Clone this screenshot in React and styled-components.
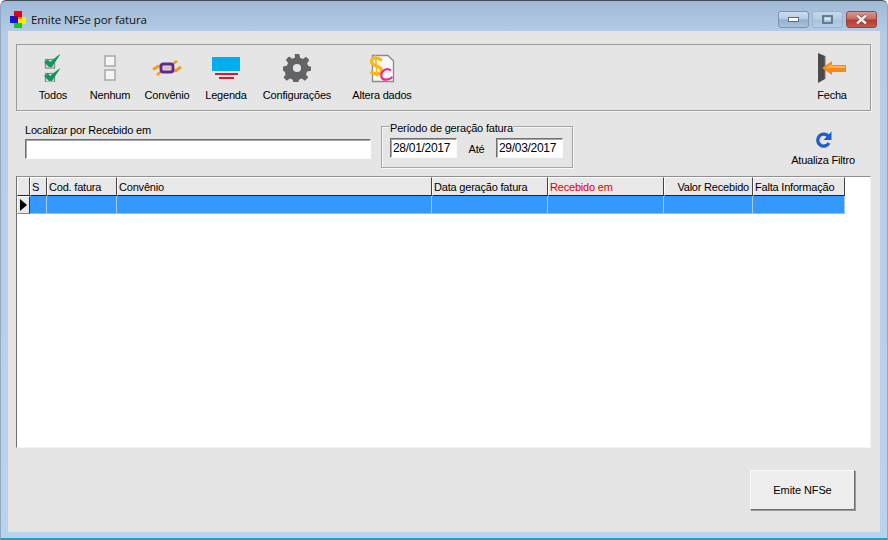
import React from 'react';
import styled, { createGlobalStyle } from 'styled-components';

const GlobalStyle = createGlobalStyle`
  html, body {
    margin: 0;
    padding: 0;
    overflow: hidden;
  }
  body {
    font-family: "Liberation Sans", Arial, sans-serif;
    font-size: 11px;
    letter-spacing: -0.2px;
    color: #000;
  }
`;

const Window = styled.div`
  width: 888px;
  height: 540px;
  box-sizing: border-box;
  display: flex;
  flex-direction: column;
  background: linear-gradient(#9fb9d6 0, #b5cce6 32px, #b9d3ee 100%);
  border: 1px solid #8fa9c2;
  border-top-color: #3f4c5a;
  border-bottom: 2px solid #1ba3c0;
  border-radius: 6px 6px 0 0;
`;

const TitleBar = styled.div`
  height: 30px;
  flex: none;
  display: flex;
  align-items: center;
  padding: 6px 10px 0 9px;
  box-sizing: border-box;
`;

const Title = styled.span`
  margin-left: 4px;
  font-family: "Open Sans", sans-serif;
  font-size: 11.5px;
  letter-spacing: -0.1px;
  color: #111;
`;

const Controls = styled.div`
  margin-left: auto;
  display: flex;
  gap: 3px;
`;

const Control = styled.div`
  width: 31px;
  height: 17px;
  box-sizing: border-box;
  display: flex;
  align-items: center;
  justify-content: center;
  border: 1px solid ${p => (p.$close ? '#8c4a46' : p.$dim ? '#9db3c9' : '#7d93ab')};
  border-radius: 3px;
  background: ${p =>
    p.$close
      ? 'linear-gradient(#d69a90 0, #cc6a5f 45%, #b53a2e 55%, #c4584c 100%)'
      : p.$dim
      ? 'linear-gradient(#c6d8ea, #b4cbe3 50%, #a9c2dd 55%, #b6cde5)'
      : 'linear-gradient(#cfdded, #b4cae1 48%, #93afcd 52%, #a9c2db)'};
`;

const Client = styled.div`
  flex: 1;
  margin: 0 7px 6px;
  background: #e5e5e5;
  display: flex;
  flex-direction: column;
  padding: 13px 9px 0 8px;
  min-height: 0;
`;

const Toolbar = styled.div`
  height: 67px;
  flex: none;
  box-sizing: border-box;
  display: flex;
  border: 1px solid #9b9b9b;
  padding: 0 8px 0 7px;
  box-shadow: 1px 1px 0 #f5f5f5;
`;

const Tool = styled.div`
  width: ${p => p.$w}px;
  flex: none;
  display: flex;
  flex-direction: column;
  align-items: center;
  margin-left: ${p => (p.$end ? 'auto' : '0')};
  white-space: nowrap;
`;

const ToolIcon = styled.div`
  height: 32px;
  margin-top: 7px;
  display: flex;
  align-items: center;
  justify-content: center;
`;

const ToolLabel = styled.span`
  margin-top: 4px;
  line-height: 14px;
`;

const FilterRow = styled.div`
  height: 65px;
  flex: none;
  display: flex;
  align-items: flex-start;
`;

const SearchBlock = styled.div`
  margin: 13px 0 0 9px;
  display: flex;
  flex-direction: column;
`;

const FieldLabel = styled.label`
  line-height: 13px;
  margin-bottom: 2px;
`;

const SearchInput = styled.div`
  width: 346px;
  height: 20px;
  box-sizing: border-box;
  background: #fff;
  border: 1px solid;
  border-color: #707070 #fafafa #fafafa #707070;
  box-shadow: inset 1px 1px 0 #a8a8a8;
`;

const PeriodGroup = styled.fieldset`
  margin: 7px 0 0 10px;
  width: 192px;
  height: 50px;
  box-sizing: border-box;
  border: 1px solid #a5a5a5;
  box-shadow: 1px 1px 0 #f7f7f7, inset 1px 1px 0 #f7f7f7;
  padding: 0 9px 0 8px;
  display: flex;
  align-items: flex-start;
  justify-content: space-between;
`;

const PeriodLegend = styled.legend`
  padding: 4px 0 0;
  margin-left: 0;
  line-height: 13px;
`;

const DateInput = styled(SearchInput)`
  width: 67px;
  padding-left: 2px;
  line-height: 18px;
  font-size: 12px;
  letter-spacing: -0.3px;
  white-space: nowrap;
  margin-top: 3px;
`;

const Until = styled.span`
  line-height: 20px;
  margin-top: 4px;
`;

const RefreshTool = styled(Tool)`
  margin-top: 4px;
  margin-right: 8px;
`;

const RefreshIcon = styled.div`
  height: 22px;
  margin-top: 14px;
  display: flex;
  align-items: center;
`;

const RefreshLabel = styled.span`
  margin-top: 2px;
  line-height: 14px;
`;

const GridBox = styled.div`
  height: 272px;
  flex: none;
  box-sizing: border-box;
  background: #fff;
  border: 1px solid;
  border-color: #8f8f8f #f4f4f4 #f4f4f4 #6e6e6e;
`;

const columns = '13px 17px 70px 315px 116px 116px 89px 92px';

const GridRow = styled.div`
  display: grid;
  grid-template-columns: ${columns};
  width: 828px;
`;

const HeadCell = styled.div`
  height: 19px;
  box-sizing: border-box;
  padding: 0 ${p => (p.$right ? '3px' : '0')} 0 1px;
  line-height: 18px;
  white-space: nowrap;
  overflow: hidden;
  background: #e8e8e8;
  border-top: 1px solid #fff;
  border-left: 1px solid #fff;
  border-right: 1px solid #444;
  border-bottom: 1px solid #222;
  color: ${p => (p.$red ? '#e00000' : '#000')};
  text-align: ${p => (p.$right ? 'right' : 'left')};
`;

const BodyCell = styled.div`
  height: 18px;
  box-sizing: border-box;
  background: #3399ff;
  border-right: 1px solid #a8c9e8;
  border-bottom: 1px solid #a8bccf;
`;

const Pointer = styled.div`
  height: 18px;
  box-sizing: border-box;
  display: flex;
  align-items: center;
  justify-content: center;
  background: #e8e8e8;
  border: 1px solid;
  border-color: #fff #333 #888 #fff;
`;

const Footer = styled.div`
  flex: 1;
  display: flex;
  justify-content: flex-end;
  align-items: flex-start;
  padding: 22px 16px 0 0;
`;

const EmitButton = styled.button`
  width: 105px;
  height: 40px;
  font: inherit;
  color: #000;
  letter-spacing: -0.1px;
  background: #eeeeee;
  border: 1px solid;
  border-color: #fbfbfb #6f6f6f #6f6f6f #fbfbfb;
  box-shadow: 1px 1px 0 #9a9a9a;
  padding: 0;
`;

const AppIcon = () => (
  <svg width="17" height="17" viewBox="0 0 17 17">
    <rect x="4" y="0" width="8" height="8" fill="#e60012" />
    <rect x="0" y="5" width="8" height="7" fill="#0a18e0" />
    <rect x="8" y="6" width="8" height="7" fill="#f4f000" />
    <rect x="4" y="12" width="8" height="5" fill="#16c81e" />
    <rect x="4" y="5" width="4" height="3" fill="#600080" />
    <path d="M8 6 H12 V8 H8 Z" fill="#f08000" />
  </svg>
);

const Minimize = () => (
  <svg width="11" height="5" viewBox="0 0 11 5">
    <rect x="0.5" y="0.5" width="10" height="4" fill="#fff" stroke="#5a6c82" />
  </svg>
);

const Maximize = () => (
  <svg width="11" height="9" viewBox="0 0 11 9">
    <rect x="1" y="1" width="9" height="7" fill="none" stroke="#55697f" strokeWidth="1.6" />
    <rect x="3" y="3" width="5" height="2" fill="#dfe8f2" />
  </svg>
);

const CloseX = () => (
  <svg width="13" height="11" viewBox="0 0 13 11">
    <path d="M2 1.500 L11 9.500 M11 1.500 L2 9.500" stroke="#5c2a26" strokeWidth="3.600" />
    <path d="M2 1.500 L11 9.500 M11 1.500 L2 9.500" stroke="#f5f0ee" strokeWidth="2.400" />
  </svg>
);

const CheckBox = ({ y }) => (
  <g transform={`translate(0 ${y})`}>
    <rect x="1.500" y="5.500" width="9" height="8.500" fill="#e4e4e4" stroke="#8c8c8c" strokeWidth="1.300" />
    <path d="M0 8 L4 5.500 L6 8 L14 1.500 L16.500 0 L8 13 L5 13 Z" fill="#0d9a58" />
  </g>
);

const TodosIcon = () => (
  <svg width="18" height="28" viewBox="0 0 18 28">
    <CheckBox y={0} />
    <CheckBox y={14} />
  </svg>
);

const NenhumIcon = () => (
  <svg width="12" height="26" viewBox="0 0 12 26">
    <rect x="1" y="1" width="10" height="10" fill="#f5f5f5" stroke="#a8a8a8" strokeWidth="1.500" />
    <rect x="1" y="15" width="10" height="10" fill="#f5f5f5" stroke="#a8a8a8" strokeWidth="1.500" />
  </svg>
);

const ConvenioIcon = () => (
  <svg width="31" height="16" viewBox="0 0 31 16">
    <path d="M1 9.500 L6 6.500 L12 5" fill="none" stroke="#f59a1c" strokeWidth="3" />
    <path d="M5 15 L10 11 M21 4 L25 1" stroke="#f59a1c" strokeWidth="2.800" />
    <path d="M29 7 L24 10.500 L18 11.500" fill="none" stroke="#f59a1c" strokeWidth="3" />
    <rect x="9" y="4" width="12" height="8" rx="2.500" fill="#ddd2e6" stroke="#5b2a96" strokeWidth="2.800" />
    <path d="M12 8 L19 8" stroke="#f0b25a" strokeWidth="1.400" />
  </svg>
);

const LegendaIcon = () => (
  <svg width="28" height="22" viewBox="0 0 28 22">
    <rect x="0" y="0" width="28" height="14" fill="#00aeef" />
    <rect x="3" y="16" width="23" height="2" fill="#c9202f" />
    <rect x="7" y="20" width="15" height="2" fill="#c9202f" />
  </svg>
);

const GearIcon = () => (
  <svg width="28" height="28" viewBox="0 0 24 24">
    <path
      fill="#636466"
      fillRule="evenodd"
      d="M10 0h4l.7 3.300 2.300 1 2.800-1.900 2.800 2.800-1.900 2.800 1 2.300L24 10.700v3.600l-3.300.7-1 2.300 1.900 2.800-2.800 2.800-2.800-1.900-2.300 1-.7 3.300h-4l-.7-3.300-2.300-1-2.800 1.900-2.800-2.800 1.900-2.800-1-2.300L0 14.300v-3.600l3.300-.7 1-2.300-1.900-2.800 2.800-2.800 2.800 1.900 2.300-1zM12 8.500a3.500 3.500 0 1 0 0 7 3.500 3.500 0 0 0 0-7z"
    />
  </svg>
);

const AlteraIcon = () => (
  <svg width="26" height="30" viewBox="0 0 26 30">
    <path d="M3.500 2.500 H19 L24.500 8 V28.500 H3.500 Z" fill="#f8f8f8" stroke="#8a8a8a" strokeWidth="1.300" />
    <path d="M13 7.500 C8 3.500 2 5 2.500 9 C3 13.500 12 12.500 12.500 17 C13 21.500 6 22.500 1.500 18.500" fill="none" stroke="#fbb713" strokeWidth="3.200" />
    <path d="M6.500 1.500 L8 23.500" stroke="#fbb713" strokeWidth="1.600" />
    <path d="M22 17.500 C17 13.500 11 19 12.500 24 C14 28 20 27 23.500 24" fill="none" stroke="#ec2a92" strokeWidth="2.200" />
  </svg>
);

const FechaIcon = () => (
  <svg width="29" height="30" viewBox="0 0 29 30">
    <path d="M0 0 L7 3 V26 L0 30 Z" fill="#4b4b4b" />
    <path d="M7 3 V26" stroke="#777" />
    <path d="M4 15 L14 8 V12 H28 V19 H14 V22 Z" fill="#f88a14" />
    <path d="M8 15 L14 11 V13 H27 V15 Z" fill="#fdb45a" />
  </svg>
);

const RefreshGlyph = () => (
  <svg width="17" height="18" viewBox="0 0 17 18">
    <path d="M13.500 5.500 A6 6 0 1 0 14 12" fill="none" stroke="#1c5fd0" strokeWidth="3.400" />
    <path d="M16.500 0.500 V9 H8.500 Z" fill="#1c5fd0" />
  </svg>
);

const tools = [
  { label: 'Todos', w: 58, icon: <TodosIcon /> },
  { label: 'Nenhum', w: 56, icon: <NenhumIcon /> },
  { label: 'Convênio', w: 58, icon: <ConvenioIcon /> },
  { label: 'Legenda', w: 60, icon: <LegendaIcon /> },
  { label: 'Configurações', w: 82, icon: <GearIcon /> },
  { label: 'Altera dados', w: 88, icon: <AlteraIcon /> },
];

const heads = [
  { label: 'S' },
  { label: 'Cod. fatura' },
  { label: 'Convênio' },
  { label: 'Data geração fatura' },
  { label: 'Recebido em', red: true },
  { label: 'Valor Recebido', right: true },
  { label: 'Falta Informação' },
];

export default function App() {
  return (
    <>
      <GlobalStyle />
      <Window>
        <TitleBar>
          <AppIcon />
          <Title>Emite NFSe por fatura</Title>
          <Controls>
            <Control><Minimize /></Control>
            <Control $dim><Maximize /></Control>
            <Control $close><CloseX /></Control>
          </Controls>
        </TitleBar>
        <Client>
          <Toolbar>
            {tools.map(t => (
              <Tool key={t.label} $w={t.w}>
                <ToolIcon>{t.icon}</ToolIcon>
                <ToolLabel>{t.label}</ToolLabel>
              </Tool>
            ))}
            <Tool $w={60} $end>
              <ToolIcon><FechaIcon /></ToolIcon>
              <ToolLabel>Fecha</ToolLabel>
            </Tool>
          </Toolbar>
          <FilterRow>
            <SearchBlock>
              <FieldLabel>Localizar por Recebido em</FieldLabel>
              <SearchInput />
            </SearchBlock>
            <PeriodGroup>
              <PeriodLegend>Período de geração fatura</PeriodLegend>
              <DateInput>28/01/2017</DateInput>
              <Until>Até</Until>
              <DateInput>29/03/2017</DateInput>
            </PeriodGroup>
            <RefreshTool $w={80} $end>
              <RefreshIcon><RefreshGlyph /></RefreshIcon>
              <RefreshLabel>Atualiza Filtro</RefreshLabel>
            </RefreshTool>
          </FilterRow>
          <GridBox>
            <GridRow>
              <HeadCell />
              {heads.map(h => (
                <HeadCell key={h.label} $red={h.red} $right={h.right}>{h.label}</HeadCell>
              ))}
            </GridRow>
            <GridRow>
              <Pointer>
                <svg width="7" height="12" viewBox="0 0 7 12"><path d="M0 0 L7 6 L0 12 Z" fill="#000" /></svg>
              </Pointer>
              {heads.map(h => <BodyCell key={h.label} />)}
            </GridRow>
          </GridBox>
          <Footer>
            <EmitButton>Emite NFSe</EmitButton>
          </Footer>
        </Client>
      </Window>
    </>
  );
}
